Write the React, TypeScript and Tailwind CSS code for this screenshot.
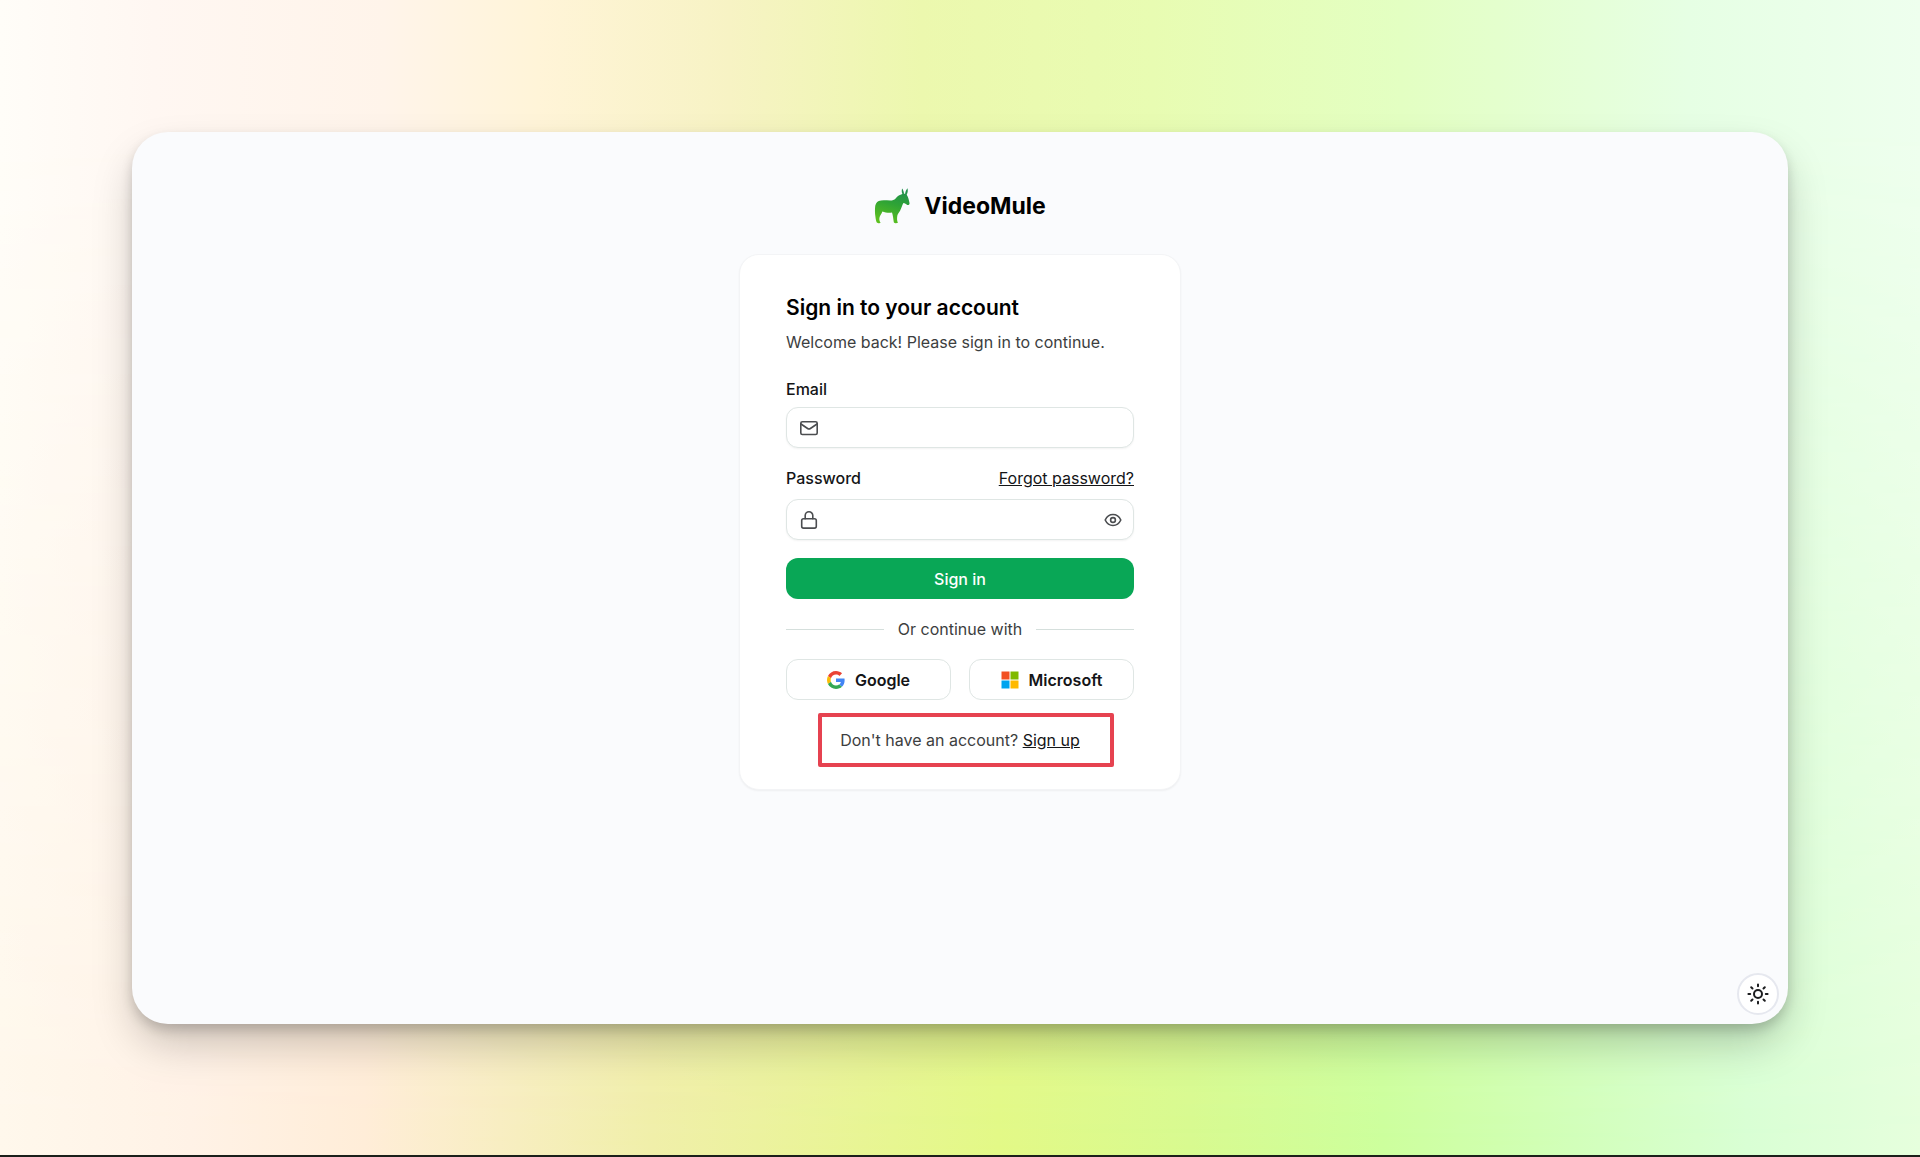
import { useState } from 'react'
import type { ReactNode } from 'react'

function MuleLogo() {
  return (
    <svg viewBox="0 0 36 36" className="size-9" aria-hidden="true">
      <defs>
        <linearGradient id="mule" x1="0.7" y1="0" x2="0.4" y2="1">
          <stop offset="0" stopColor="#1f8f4e" />
          <stop offset="0.45" stopColor="#2ea336" />
          <stop offset="1" stopColor="#5cc01e" />
        </linearGradient>
      </defs>
      <path
        fill="url(#mule)"
        d="M28.1 0.6 C27.5 2.6 27.7 4.4 28.4 6 C25.8 6.6 23.6 8.2 21.6 10.4 C20.2 11.8 18.4 12.5 16.4 12.5 C12 12.5 8 11.8 4.8 13 C2.2 14 1.1 16.6 1 20.4 C0.9 24.4 1 26 1.4 28.4 C1.7 30.6 2 32.8 2.8 34.4 C3.6 35.3 6.3 35.5 6.6 34.6 C5.6 33.4 5.2 31.8 5.4 30 C5.8 27.6 7.6 26 8.4 23.6 C11.2 24.6 14.8 25.2 18 24.6 C19 27.2 19.2 31 19.8 34.2 C20.4 35.5 23.6 35.5 23.9 34.6 C22.9 33.2 22.9 30.4 23.3 27.8 C23.6 25.8 25 24.4 26.2 22.4 C27.8 19.6 28 17.2 29.4 15 C31 15.2 32 16 33.2 16.9 C34.6 17.4 35.8 16.2 35.5 14.9 C34.8 12.2 34.5 9.2 32.7 6.8 C33.7 5 34.1 2.4 33.5 0.2 C32.2 1.8 31.3 3.6 31.1 5.8 L30 5.8 C29.9 3.8 29.2 2 28.1 0.6 Z"
      />
    </svg>
  )
}

function GoogleIcon() {
  return (
    <svg viewBox="0 0 48 48" className="size-[18px]" aria-hidden="true">
      <path fill="#EA4335" d="M24 9.5c3.54 0 6.71 1.22 9.21 3.6l6.85-6.85C35.9 2.38 30.47 0 24 0 14.62 0 6.51 5.38 2.56 13.22l7.98 6.19C12.43 13.72 17.74 9.5 24 9.5z" />
      <path fill="#4285F4" d="M46.98 24.55c0-1.57-.15-3.09-.38-4.55H24v9.02h12.94c-.58 2.96-2.26 5.48-4.78 7.18l7.73 6c4.51-4.18 7.09-10.36 7.09-17.65z" />
      <path fill="#FBBC05" d="M10.53 28.59c-.48-1.45-.76-2.99-.76-4.59s.27-3.14.76-4.59l-7.98-6.19C.92 16.46 0 20.12 0 24c0 3.88.92 7.54 2.56 10.78l7.97-6.19z" />
      <path fill="#34A853" d="M24 48c6.48 0 11.93-2.13 15.89-5.81l-7.73-6c-2.15 1.45-4.92 2.3-8.16 2.3-6.26 0-11.57-4.22-13.47-9.91l-7.98 6.19C6.51 42.62 14.62 48 24 48z" />
    </svg>
  )
}

function MicrosoftIcon() {
  return (
    <svg viewBox="0 0 18 18" className="size-[18px]" aria-hidden="true">
      <path fill="#F25022" d="M0.5 0.5h8v8h-8z" />
      <path fill="#7FBA00" d="M9.5 0.5h8v8h-8z" />
      <path fill="#00A4EF" d="M0.5 9.5h8v8h-8z" />
      <path fill="#FFB900" d="M9.5 9.5h8v8h-8z" />
    </svg>
  )
}

function LineIcon({ children }: { children: ReactNode }) {
  return (
    <svg
      viewBox="0 0 20 20"
      className="size-5 shrink-0 text-[#4b4d50]"
      fill="none"
      stroke="currentColor"
      strokeWidth="1.6"
      strokeLinecap="round"
      strokeLinejoin="round"
      aria-hidden="true"
    >
      {children}
    </svg>
  )
}

const fieldClass =
  'flex h-[41px] items-center rounded-xl border border-[#dfe6e4] bg-white pr-2.5 pl-3 shadow-xs focus-within:border-[#09a756]'

const providerClass = 'flex h-[41px] items-center justify-center gap-[10px] rounded-xl border border-[#dfe6e4]'

export default function App() {
  const [showPassword, setShowPassword] = useState(false)

  return (
    <div className="relative isolate flex min-h-screen flex-col border-b-2 border-[#1b1f1a] bg-[linear-gradient(90deg,#fff8ec_0%,#fff2e6_10%,#ffedd8_19%,#f0efa9_34%,#e3f987_52%,#d8fa90_62%,#cdff9d_72%,#d2ffba_82%,#d9ffd4_91%,#e6ffdd_100%)] font-[Inter,sans-serif] text-base leading-6 text-[#3c3e40] before:absolute before:inset-0 before:-z-10 before:bg-[linear-gradient(90deg,#fffdf8_0%,#fff7f2_8%,#fff4ea_20%,#fff4d8_28%,#f7f3c4_38%,#ecf8ae_48%,#e8fcb2_60%,#e3ffc2_73%,#e6ffe4_88%,#eeffee_100%)] before:mask-b-from-10%">
      <div className="m-[132px] mb-[131px] flex flex-1 flex-col rounded-[36px] bg-[#fafbfd] pt-14 shadow-[0_22px_44px_-4px_rgba(0,0,0,0.22),0_6px_12px_rgba(0,0,0,0.16)]">
        <main className="mx-auto w-full max-w-[442px]">
          <div className="flex items-center justify-center gap-3.5">
            <MuleLogo />
            <span className="text-[23px] font-bold text-black">VideoMule</span>
          </div>

          <div className="mt-[30px] rounded-[20px] border border-[#f3f4f6] bg-white px-[46px] pt-[39px] pb-[37px] shadow-xs">
            <h1 className="text-[21px] leading-7 font-semibold text-black">Sign in to your account</h1>
            <p className="mt-2">Welcome back! Please sign in to continue.</p>

            <form onSubmit={(e) => e.preventDefault()}>
              <label htmlFor="email" className="mt-[23px] block font-medium text-[#141517]">
                Email
              </label>
              <div className={`mt-1.5 ${fieldClass}`}>
                <LineIcon>
                  <rect x="1.8" y="3.7" width="16.4" height="12.8" rx="1.6" />
                  <path d="M2 6l6.6 4.5a2.5 2.5 0 0 0 2.8 0L18 6" />
                </LineIcon>
                <input id="email" type="email" className="ml-2 w-full min-w-0 outline-none" />
              </div>

              <div className="mt-[18px] flex items-center justify-between">
                <label htmlFor="password" className="font-medium text-[#141517]">
                  Password
                </label>
                <a href="#forgot" className="text-[#141517] underline">
                  Forgot password?
                </a>
              </div>
              <div className={`mt-[9px] ${fieldClass}`}>
                <LineIcon>
                  <rect x="2.7" y="8.7" width="14.6" height="9.4" rx="1.8" />
                  <path d="M6.2 8.7V5.6a3.8 3.8 0 0 1 7.6 0v3.1" />
                </LineIcon>
                <input
                  id="password"
                  type={showPassword ? 'text' : 'password'}
                  className="mx-2 w-full min-w-0 outline-none"
                />
                <button type="button" aria-label="Show password" onClick={() => setShowPassword(!showPassword)}>
                  <LineIcon>
                    <path d="M2.2 10c1.6-3.4 4.4-5.5 7.8-5.5s6.2 2.1 7.8 5.5c-1.6 3.4-4.4 5.5-7.8 5.5S3.8 13.4 2.2 10z" />
                    <circle cx="10" cy="10" r="2.4" />
                  </LineIcon>
                </button>
              </div>

              <button type="submit" className="mt-[18px] h-[41px] w-full rounded-xl bg-[#09a756] font-medium text-white">
                Sign in
              </button>
            </form>

            <div className="mt-[18px] flex items-center gap-3.5">
              <span className="h-px flex-1 bg-[#d5dfdc]" />
              <span>Or continue with</span>
              <span className="h-px flex-1 bg-[#d5dfdc]" />
            </div>

            <div className="mt-[18px] grid grid-cols-2 gap-[18px] font-semibold text-[#141517]">
              <button type="button" className={providerClass}>
                <GoogleIcon />
                Google
              </button>
              <button type="button" className={providerClass}>
                <MicrosoftIcon />
                Microsoft
              </button>
            </div>

            <p className="relative mt-7 text-center">
              Don't have an account?{' '}
              <a href="#signup" className="text-[#141517] underline">
                Sign up
              </a>
              <span className="pointer-events-none absolute -inset-y-[15px] right-5 left-8 rounded-xs border-4 border-[#e64250]" />
            </p>
          </div>
        </main>

        <button
          type="button"
          aria-label="Toggle theme"
          className="mt-auto mr-[9px] mb-[9px] flex size-[42px] items-center justify-center self-end rounded-full border-2 border-[#e6e8ef] bg-white text-[#1c1d1f]"
        >
          <svg viewBox="0 0 24 24" className="size-6" fill="none" stroke="currentColor" strokeWidth="2" strokeLinecap="round" aria-hidden="true">
            <circle cx="12" cy="12" r="4" />
            <path d="M12 2.4v1.8M12 19.8v1.8M2.4 12h1.8M19.8 12h1.8M5.2 5.2l1.3 1.3M17.500 17.5l1.3 1.3M5.2 18.8l1.3-1.3M17.5 6.5l1.3-1.3" />
          </svg>
        </button>
      </div>
    </div>
  )
}
